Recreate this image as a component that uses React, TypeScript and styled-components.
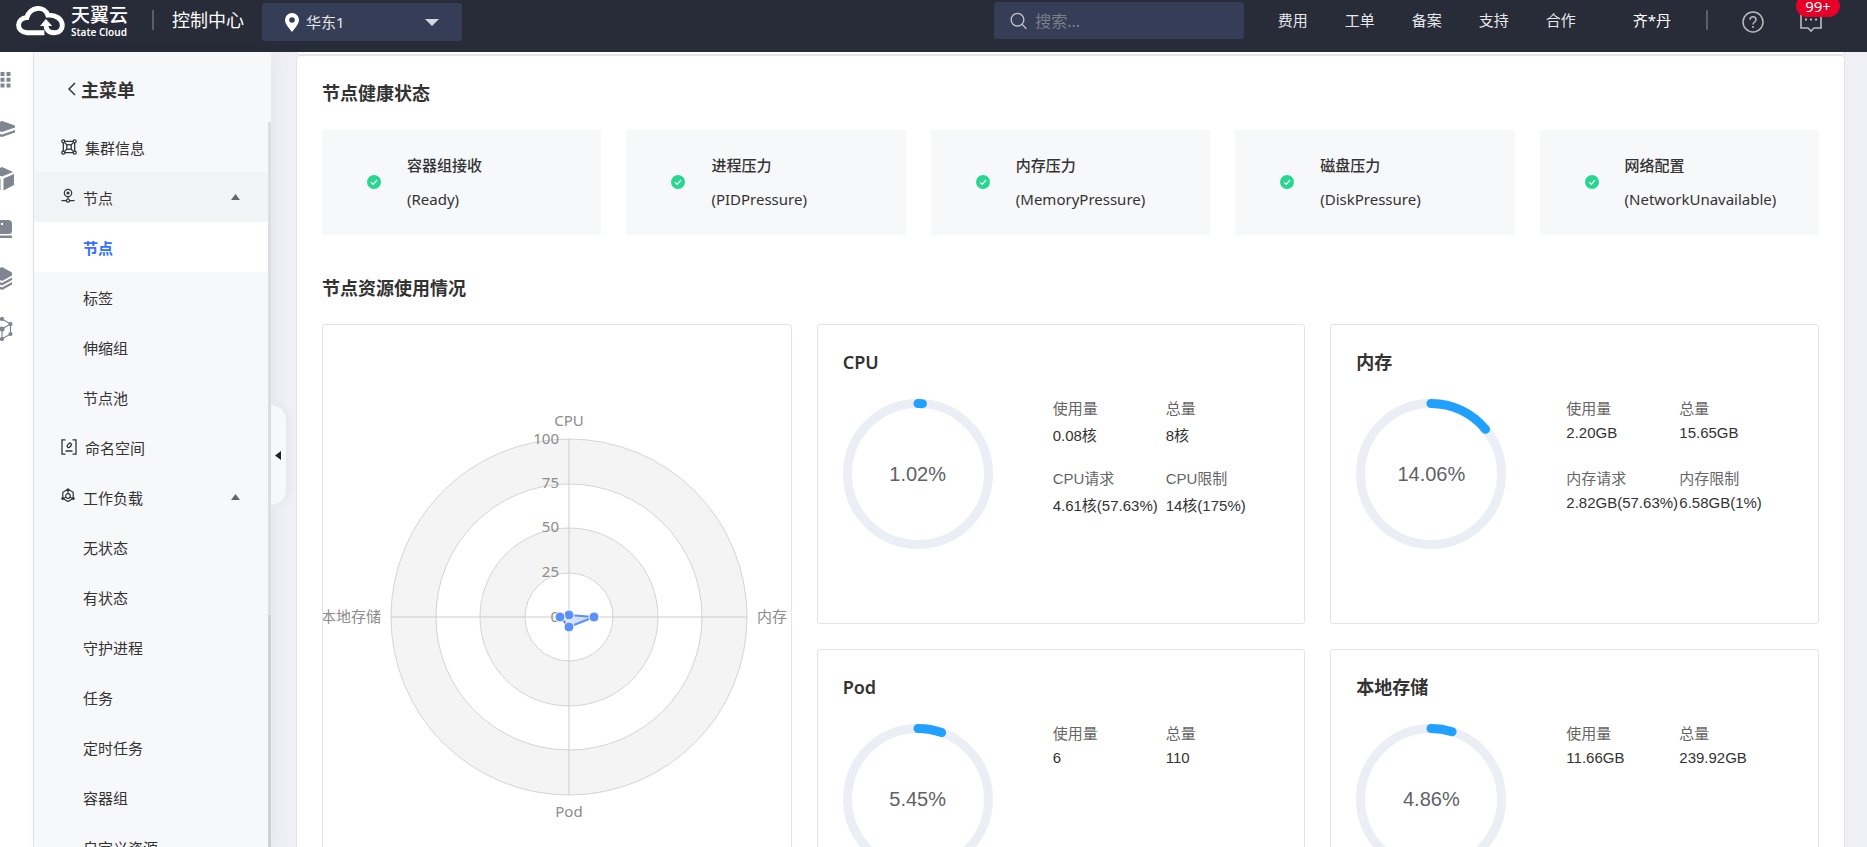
import React from 'react';
import styled, { createGlobalStyle } from 'styled-components';

const GlobalStyle = createGlobalStyle`
  *, *::before, *::after { box-sizing: border-box; }
  html, body, #root { height: 100%; }
  body {
    margin: 0;
    overflow: hidden;
    background: #eef0f5;
    color: #333;
    font-family: "Noto Sans", "Noto Sans CJK SC", sans-serif;
    font-size: 15px;
  }
  h2, h3, p, ul, dl, dd { margin: 0; padding: 0; }
  ul { list-style: none; }
  a { color: inherit; text-decoration: none; }
  button, input, select { font: inherit; color: inherit; border: 0; padding: 0; margin: 0; background: none; }
  button { cursor: pointer; }
`;

const Shell = styled.div`
  display: flex;
  flex-direction: column;
  height: 100vh;
`;

const Header = styled.header`
  display: flex;
  align-items: flex-start;
  flex: none;
  height: 52px;
  padding-left: 16px;
  background: #282b38;
  color: #e6e7ea;
`;

const Logo = styled.a`
  flex: none;
  display: flex;
  gap: 6px;
  width: 112px;
  height: 42px;
  margin-right: 24px;
  align-items: center;
`;

const LogoText = styled.span`
  display: flex;
  flex-direction: column;
  color: #fff;
`;

const LogoName = styled.span`
  font-family: "Noto Sans CJK SC", sans-serif;
  font-size: 19px;
  line-height: 22px;
  font-weight: 500;
  white-space: nowrap;
`;

const LogoSub = styled.span`
  font-size: 10px;
  line-height: 14px;
  font-weight: 600;
  white-space: nowrap;
`;

const Divider = styled.span`
  flex: none;
  width: 2px;
  height: 20px;
  margin-top: 10px;
  background: #5b5d67;
`;

const ConsoleLink = styled.a`
  margin: 0 18px 0 18px;
  font-size: 18px;
  line-height: 40px;
  color: #fff;
  white-space: nowrap;
`;

const RegionBox = styled.label`
  position: relative;
  display: flex;
  align-items: center;
  flex: none;
  width: 200px;
  height: 38px;
  margin-top: 3px;
  border-radius: 3px;
  background: #353e56;

  svg { position: absolute; pointer-events: none; }
  svg:first-child { left: 23px; }
  svg:last-child { right: 23px; }
`;

const RegionSelect = styled.select`
  appearance: none;
  width: 100%;
  height: 100%;
  padding: 0 44px;
  outline: 0;
  cursor: pointer;
`;

const SearchBox = styled.label`
  display: flex;
  align-items: center;
  gap: 8px;
  flex: none;
  width: 250px;
  height: 37px;
  margin: 2px 34px 0 auto;
  padding: 0 16px;
  border-radius: 3px;
  background: #353e56;

  input {
    width: 100%;
    min-width: 0;
    font-size: 16px;
    outline: 0;
  }
  input::placeholder { color: #7a7f8c; opacity: 1; }
`;

const TopNav = styled.nav`
  display: flex;
  gap: 37px;
  line-height: 40px;
  white-space: nowrap;
`;

const UserLink = styled.a`
  margin: 0 35px 0 57px;
  line-height: 40px;
  color: #fff;
  white-space: nowrap;
`;

const IconButton = styled.button`
  position: relative;
  display: flex;
  margin-top: 11px;
  color: #b9bbc1;
`;

const Badge = styled.span`
  position: absolute;
  left: -4px;
  top: -16px;
  width: 44px;
  height: 22px;
  border-radius: 11px;
  background: #e60027;
  color: #fff;
  font-size: 15px;
  line-height: 22px;
  text-align: center;
`;

const HeaderTools = styled.div`
  display: flex;
  gap: 36px;
  margin: 0 45px 0 34px;
`;

const Body = styled.div`
  display: flex;
  flex: 1;
  min-height: 0;
`;

const Rail = styled.nav`
  display: flex;
  flex-direction: column;
  flex: none;
  gap: 26px;
  width: 34px;
  padding-top: 15px;
  overflow: hidden;
  background: #fff;
  border-right: 1px solid #e2e4ee;
  color: #808591;

  a { display: flex; width: 24px; height: 24px; margin-left: -8px; }
`;

const Sidebar = styled.aside`
  position: relative;
  display: flex;
  flex-direction: column;
  flex: none;
  width: 237px;
  background: #f7f8fa;
  box-shadow: 2px 0 14px rgba(40, 45, 80, 0.05);
`;

const BackLink = styled.a`
  display: flex;
  align-items: center;
  gap: 5px;
  flex: none;
  height: 70px;
  padding: 4px 0 0 34px;
  font-size: 18px;
  font-weight: 700;
`;

const MenuScroll = styled.div`
  display: flex;
  flex: 1;
  min-height: 0;
  overflow: hidden;
`;

const MenuList = styled.ul`
  flex: 1;
`;

const ScrollTrack = styled.div`
  display: flex;
  flex-direction: column;
  width: 3px;
  background: #dddee1;
  &::after { content: ""; margin-top: auto; height: 32%; background: #cfd0d2; }
`;

const MenuLink = styled.a<{ $open?: boolean; $active?: boolean; $sub?: boolean }>`
  display: flex;
  align-items: center;
  gap: 8px;
  height: 50px;
  padding: 0 28px 0 ${(p) => (p.$sub ? 49 : 27)}px;
  background: ${(p) => (p.$active ? '#fff' : p.$open ? '#f2f3f5' : 'transparent')};
  color: ${(p) => (p.$active ? '#3370ff' : '#333')};
  font-weight: ${(p) => (p.$active ? 700 : 400)};
`;

const MenuCaret = styled.svg`
  margin-left: auto;
`;

const CollapseHandle = styled.button`
  position: absolute;
  left: 100%;
  top: 353px;
  display: flex;
  align-items: center;
  width: 15px;
  height: 100px;
  padding-left: 4px;
  border-radius: 0 15px 15px 0;
  background: #f7f8fa;
  box-shadow: 3px 0 8px rgba(40, 45, 80, 0.05);
`;

const Main = styled.main`
  display: flex;
  flex-direction: column;
  flex: 1;
  min-width: 0;
  padding: 0 22px 0 25px;
  overflow: hidden;
`;

const PreviousPanel = styled.div`
  flex: none;
  height: 3px;
  background: #fff;
  border: 1px solid #e2e3ee;
  border-top: 0;
  border-radius: 0 0 3px 3px;
`;

const Panel = styled.section`
  display: flex;
  flex-direction: column;
  flex: none;
  padding: 23px 25px 25px;
  background: #fff;
  border: 1px solid #e2e3ee;
  border-radius: 4px;
`;

const SectionTitle = styled.h2`
  height: 28px;
  font-size: 18px;
  line-height: 28px;
  font-weight: 700;
`;

const StatusGrid = styled.div`
  display: grid;
  grid-template-columns: repeat(5, 1fr);
  gap: 25px;
  margin: 23px 0 39px;
`;

const StatusTile = styled.div`
  display: flex;
  align-items: center;
  gap: 26px;
  height: 105px;
  padding: 0 0 2px 45px;
  background: #f7f8fa;
`;

const StatusText = styled.div`
  line-height: 34px;
  white-space: nowrap;
  strong { display: block; font-weight: 500; }
`;

const UsageGrid = styled.div`
  display: grid;
  grid-template-columns: 470fr 489fr 489fr;
  grid-auto-rows: 300px;
  gap: 25px;
  margin-top: 22px;
`;

const Card = styled.article`
  min-width: 0;
  border: 1px solid #e2e3ec;
  border-radius: 3px;
  background: #fff;
`;

const RadarCard = styled(Card)`
  grid-row: span 2;
  overflow: hidden;
  svg { display: block; }
  text { font-size: 15px; fill: #8c8c8c; }
`;

const UsageCard = styled(Card)`
  padding: 25px;
`;

const CardTitle = styled.h3`
  font-size: 18px;
  line-height: 24px;
  font-weight: 600;
`;

const CardBody = styled.div`
  display: flex;
  gap: 60px;
  margin-top: 25px;
`;

const Gauge = styled.div`
  display: grid;
  flex: none;
  width: 150px;
  height: 150px;
  place-items: center;
  font-family: "Liberation Sans", sans-serif;
  font-size: 20px;
  color: #606266;
  > * { grid-area: 1 / 1; }
`;

const Stats = styled.dl`
  display: grid;
  grid-template-columns: 113px 113px;
  grid-auto-rows: 70px;
  font-family: "Liberation Sans", "Noto Sans CJK SC", sans-serif;
  white-space: nowrap;
  dt { color: #666; line-height: 20px; }
  dd { margin-top: 5px; }
`;

const rings = [178, 133, 89, 44];
const axisLabels = [
  ['100', 114], ['75', 158], ['50', 202], ['25', 247], ['0', 292],
] as const;

function Radar() {
  const cx = 246;
  const cy = 292;
  return (
    <svg width="468" height="623" viewBox="0 0 468 623" role="img" aria-label="节点资源使用情况">
      {rings.map((r, i) => (
        <circle key={r} cx={cx} cy={cy} r={r} fill={i % 2 ? '#fff' : '#f4f4f4'} stroke="#d4d4d4" />
      ))}
      <path d={`M${cx} ${cy - 178}V${cy + 178}M${cx - 178} ${cy}H${cx + 178}`} stroke="#cdcdcd" />
      <text x={cx} y="101" textAnchor="middle">CPU</text>
      <text x={cx} y="492" textAnchor="middle">Pod</text>
      <text x="58" y="297" textAnchor="end">本地存储</text>
      <text x="434" y="297">内存</text>
      {axisLabels.map(([t, y]) => (
        <text key={t} x="236" y={y + 5} textAnchor="end">{t}</text>
      ))}
      <path d={`M${cx} ${cy - 2}L${cx + 25} ${cy}L${cx} ${cy + 10}L${cx - 9} ${cy}Z`} fill="#d3e0fd" stroke="#5b8ff9" strokeWidth="2" />
      {[[0, -2], [25, 0], [0, 10], [-9, 0]].map(([x, y]) => (
        <circle key={`${x},${y}`} cx={cx + x} cy={cy + y} r="5" fill="#5b8ff9" stroke="#fff" />
      ))}
    </svg>
  );
}

function Ring({ value }: { value: number }) {
  const r = 70.5;
  const c = 2 * Math.PI * r;
  return (
    <Gauge>
      <svg width="150" height="150" viewBox="0 0 150 150" fill="none" strokeWidth="9" aria-hidden="true">
        <circle cx="75" cy="75" r={r} stroke="#ebeef5" />
        <circle cx="75" cy="75" r={r} stroke="#20a0ff" strokeLinecap="round" strokeDasharray={`${(c * value) / 100} ${c}`} transform="rotate(-90 75 75)" />
      </svg>
      <span>{value}%</span>
    </Gauge>
  );
}

const usage = [
  { title: 'CPU', value: 1.02, stats: [['使用量', '0.08核'], ['总量', '8核'], ['CPU请求', '4.61核(57.63%)'], ['CPU限制', '14核(175%)']] },
  { title: '内存', value: 14.06, stats: [['使用量', '2.20GB'], ['总量', '15.65GB'], ['内存请求', '2.82GB(57.63%)'], ['内存限制', '6.58GB(1%)']] },
  { title: 'Pod', value: 5.45, stats: [['使用量', '6'], ['总量', '110']] },
  { title: '本地存储', value: 4.86, stats: [['使用量', '11.66GB'], ['总量', '239.92GB']] },
];

const conditions = [
  ['容器组接收', '(Ready)'],
  ['进程压力', '(PIDPressure)'],
  ['内存压力', '(MemoryPressure)'],
  ['磁盘压力', '(DiskPressure)'],
  ['网络配置', '(NetworkUnavailable)'],
];

const ClusterIcon = () => (
  <svg width="16" height="16" viewBox="0 0 16 16" fill="none" stroke="#333" strokeWidth="1.3">
    <circle cx="2.3" cy="2.3" r="1.5" /><circle cx="13.7" cy="2.3" r="1.5" />
    <circle cx="2.3" cy="13.7" r="1.5" /><circle cx="13.7" cy="13.7" r="1.5" />
    <path d="M3.8 2.3h8.4M3.8 13.7h8.4M2.3 3.8v8.4M13.7 3.8v8.4M3.4 3.4l2.6 2.6M12.6 3.4L10 6M3.4 12.6L6 10M12.6 12.6L10 10" />
    <rect x="5.8" y="5.8" width="4.4" height="4.4" />
  </svg>
);
const NodeIcon = () => (
  <svg width="14" height="18" viewBox="0 0 14 18" fill="none" stroke="#333" strokeWidth="1.2">
    <circle cx="7" cy="5" r="3.7" /><circle cx="7" cy="5" r="1" fill="#333" />
    <path d="M7 8.700v2.300M.5 12.600h4.800M8.700 12.600h4.800" /><circle cx="7" cy="12.600" r="1.600" />
  </svg>
);
const NamespaceIcon = () => (
  <svg width="16" height="16" viewBox="0 0 16 16" fill="none" stroke="#333" strokeWidth="1.3">
    <path d="M4.5.8H1v14.4h3.5M11.5.8H15v14.4h-3.5M4.5 12h7" />
    <rect x="5.8" y="4.8" width="5" height="3" rx="1.5" transform="rotate(-50 8.3 6.3)" />
  </svg>
);
const WorkloadIcon = () => (
  <svg width="14" height="18" viewBox="0 0 14 18" fill="none" stroke="#333" strokeWidth="1.2">
    <path d="M7 1.3l5.2 3v6.2L7 13.6l-5.2-3.1V4.3zM7 1.3v4.6M1.8 10.7L5 9.2M12.2 10.7L9 9.2" />
    <circle cx="7" cy="8" r="2.3" /><circle cx="7" cy="1.8" r=".8" fill="#333" />
    <circle cx="1.6" cy="10.6" r=".8" fill="#333" /><circle cx="12.4" cy="10.6" r=".8" fill="#333" />
  </svg>
);

type Item = { label: string; icon?: React.ReactNode; open?: boolean; active?: boolean; shaded?: boolean };
const menu: Item[] = [
  { label: '集群信息', icon: <ClusterIcon /> },
  { label: '节点', icon: <NodeIcon />, open: true, shaded: true },
  { label: '节点', active: true },
  { label: '标签' },
  { label: '伸缩组' },
  { label: '节点池' },
  { label: '命名空间', icon: <NamespaceIcon /> },
  { label: '工作负载', icon: <WorkloadIcon />, open: true },
  { label: '无状态' },
  { label: '有状态' },
  { label: '守护进程' },
  { label: '任务' },
  { label: '定时任务' },
  { label: '容器组' },
  { label: '自定义资源' },
];

const railIcons: [string, React.ReactNode][] = [
  ['全部产品', <path d="M2.500 5h4v4h-4zM8.500 5h4v4h-4zM14.500 5h4v4h-4zM2.500 10.700h4v4h-4zM8.500 10.700h4v4h-4zM14.500 10.700h4v4h-4zM2.500 16.400h4v4h-4zM8.500 16.400h4v4h-4zM14.500 16.400h4v4h-4z" />],
  ['镜像', <path d="M10 4l13 4.500v2L10 15-3 10.500v-2zM-3 13.500l13 4 13-4.500v2.500L10 20l-13-4z" />],
  ['容器', <path d="M10 0l11 5-11 4.500L-1 5zM11.500 11.500L22 7v11l-10.500 5.500zM8.500 11.500v12L-2 18V7z" />],
  ['主机', <path fillRule="evenodd" d="M2 3h14q4 0 4 4v7q0 3-3 3H2zM9 6v2h2V6zM0 18.500h20V21H0z" />],
  ['存储', <path d="M10 0l10 5.500v3L10 14 0 8.500v-3zM0 10.500l10 5.500 10-5.500v2.500l-10 5.500L0 13zM0 15l10 5.500L20 15v2.500L10 23 0 17.500z" />],
  ['集群', <g stroke="currentColor" strokeWidth="1.200"><path fill="none" d="M10 2l8.500 5v10L10 22M10 12l8.500-5M10 12v10" /><circle cx="10" cy="2" r="1.500" /><circle cx="18.500" cy="7" r="1.500" /><circle cx="18.500" cy="17" r="1.500" /><circle cx="10" cy="22" r="1.500" /><circle cx="10" cy="12" r="2" /></g>],
];

export default function App() {
  return (
    <Shell>
      <GlobalStyle />
      <Header>
        <Logo href="#" aria-label="天翼云 State Cloud">
          <svg width="50" height="32" viewBox="0 0 50 32" fill="none" stroke="#fff" strokeWidth="5">
            <path d="M29 28H11.500C-1 27 .5 13 11 12.500C14 1 29 0 32.500 10C50 9 51.500 28 39 28C33 28 30.500 24 30.500 20" />
            <path d="M30.500 14l6.500 7H24.500z" fill="#fff" stroke="none" />
          </svg>
          <LogoText>
            <LogoName>天翼云</LogoName>
            <LogoSub>State Cloud</LogoSub>
          </LogoText>
        </Logo>
        <Divider />
        <ConsoleLink href="#">控制中心</ConsoleLink>
        <RegionBox>
          <svg width="14" height="19" viewBox="0 0 14 19" fill="#fff">
            <path fillRule="evenodd" d="M7 0a7 7 0 0 1 7 7c0 4-4 8-7 12C4 15 0 11 0 7a7 7 0 0 1 7-7zm0 4.200a2.800 2.800 0 1 0 0 5.600 2.800 2.800 0 0 0 0-5.600z" />
          </svg>
          <RegionSelect aria-label="区域"><option>华东1</option></RegionSelect>
          <svg width="14" height="7" viewBox="0 0 14 7" fill="#d5d6d9"><path d="M0 0h14L7 7z" /></svg>
        </RegionBox>
        <SearchBox>
          <svg width="20" height="20" viewBox="0 0 20 20" fill="none" stroke="#c3c5ca" strokeWidth="1.500">
            <circle cx="8.500" cy="8.500" r="7.200" /><path d="M13.800 13.800l4.700 5" />
          </svg>
          <input type="text" aria-label="搜索" placeholder="搜索..." />
        </SearchBox>
        <TopNav>
          {['费用', '工单', '备案', '支持', '合作'].map((t) => <a key={t} href="#">{t}</a>)}
        </TopNav>
        <UserLink href="#">齐*丹</UserLink>
        <Divider />
        <HeaderTools>
          <IconButton aria-label="帮助">
            <svg width="22" height="22" viewBox="0 0 22 22" fill="none" stroke="currentColor" strokeWidth="1.500">
              <circle cx="11" cy="11" r="10" /><path d="M8 8.800c0-4 6-4 6 0 0 2.200-3 2.200-3 4.600" /><path d="M11 15v2" />
            </svg>
          </IconButton>
          <IconButton aria-label="消息">
            <svg width="22" height="22" viewBox="0 0 22 22" fill="none" stroke="currentColor" strokeWidth="1.600">
              <path d="M1 1h20v16h-7l-3 3-3-3H1z" /><path d="M5 8.500h2M10 8.500h2M15 8.500h2" strokeWidth="2" />
            </svg>
            <Badge>99+</Badge>
          </IconButton>
        </HeaderTools>
      </Header>
      <Body>
        <Rail aria-label="产品">
          {railIcons.map(([label, shape]) => (
            <a key={label} href="#" aria-label={label}>
              <svg width="24" height="24" viewBox="0 0 24 24" fill="currentColor">{shape}</svg>
            </a>
          ))}
        </Rail>
        <Sidebar>
          <BackLink href="#">
            <svg width="8" height="14" viewBox="0 0 8 14" fill="none" stroke="#333" strokeWidth="1.500"><path d="M7 1L1 7l6 6" /></svg>
            主菜单
          </BackLink>
          <MenuScroll>
            <MenuList>
              {menu.map((m, i) => (
                <li key={i}>
                  <MenuLink href="#" $open={m.shaded} $active={m.active} $sub={!m.icon}>
                    {m.icon}
                    {m.label}
                    {m.open && <MenuCaret width="9" height="6" viewBox="0 0 9 6" fill="#666"><path d="M0 6h9L4.500 0z" /></MenuCaret>}
                  </MenuLink>
                </li>
              ))}
            </MenuList>
            <ScrollTrack />
          </MenuScroll>
          <CollapseHandle aria-label="收起菜单">
            <svg width="6" height="9" viewBox="0 0 6 9" fill="#222"><path d="M6 0v9L0 4.500z" /></svg>
          </CollapseHandle>
        </Sidebar>
        <Main>
          <PreviousPanel />
          <Panel>
            <SectionTitle>节点健康状态</SectionTitle>
            <StatusGrid>
              {conditions.map(([name, code]) => (
                <StatusTile key={code}>
                  <svg width="14" height="14" viewBox="0 0 14 14" fill="none">
                    <circle cx="7" cy="7" r="7" fill="#29d690" /><path d="M4 7.200l2.200 2.200L10 5" stroke="#fff" strokeWidth="1.200" />
                  </svg>
                  <StatusText><strong>{name}</strong>{code}</StatusText>
                </StatusTile>
              ))}
            </StatusGrid>
            <SectionTitle>节点资源使用情况</SectionTitle>
            <UsageGrid>
              <RadarCard><Radar /></RadarCard>
              {usage.map((u) => (
                <UsageCard key={u.title}>
                  <CardTitle>{u.title}</CardTitle>
                  <CardBody>
                    <Ring value={u.value} />
                    <Stats>
                      {u.stats.map(([k, v]) => (
                        <div key={k}><dt>{k}</dt><dd>{v}</dd></div>
                      ))}
                    </Stats>
                  </CardBody>
                </UsageCard>
              ))}
            </UsageGrid>
          </Panel>
        </Main>
      </Body>
    </Shell>
  );
}
